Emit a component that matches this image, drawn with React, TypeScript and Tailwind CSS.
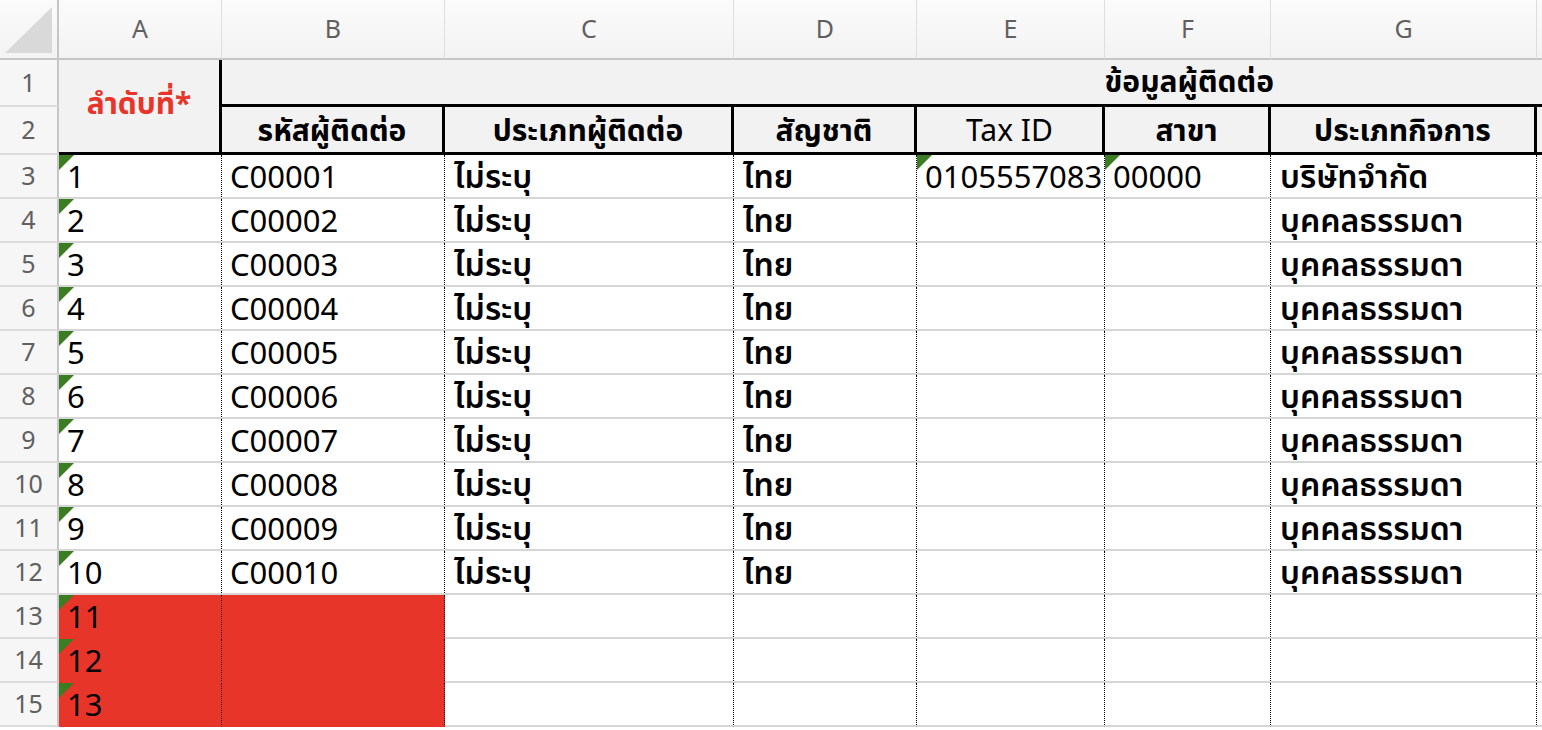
import React from "react";

type Row = {
  n: string;
  code?: string;
  type?: string;
  nat?: string;
  tax?: string;
  branch?: string;
  biz?: string;
  red?: boolean;
};

const rows: Row[] = [
  { n: "1", code: "C00001", type: "ไม่ระบุ", nat: "ไทย", tax: "0105557083", branch: "00000", biz: "บริษัทจำกัด" },
  { n: "2", code: "C00002", type: "ไม่ระบุ", nat: "ไทย", biz: "บุคคลธรรมดา" },
  { n: "3", code: "C00003", type: "ไม่ระบุ", nat: "ไทย", biz: "บุคคลธรรมดา" },
  { n: "4", code: "C00004", type: "ไม่ระบุ", nat: "ไทย", biz: "บุคคลธรรมดา" },
  { n: "5", code: "C00005", type: "ไม่ระบุ", nat: "ไทย", biz: "บุคคลธรรมดา" },
  { n: "6", code: "C00006", type: "ไม่ระบุ", nat: "ไทย", biz: "บุคคลธรรมดา" },
  { n: "7", code: "C00007", type: "ไม่ระบุ", nat: "ไทย", biz: "บุคคลธรรมดา" },
  { n: "8", code: "C00008", type: "ไม่ระบุ", nat: "ไทย", biz: "บุคคลธรรมดา" },
  { n: "9", code: "C00009", type: "ไม่ระบุ", nat: "ไทย", biz: "บุคคลธรรมดา" },
  { n: "10", code: "C00010", type: "ไม่ระบุ", nat: "ไทย", biz: "บุคคลธรรมดา" },
  { n: "11", red: true },
  { n: "12", red: true },
  { n: "13", red: true },
];

const Tri = () => (
  <svg className="absolute left-0 top-0" width="15" height="15" viewBox="0 0 15 15">
    <polygon points="0,0 15,0 0,15" fill="#3b7d23" />
  </svg>
);

const Cell = ({
  children,
  red,
  tri,
  thai,
}: {
  children?: React.ReactNode;
  red?: boolean;
  tri?: boolean;
  thai?: boolean;
}) => (
  <div
    className={
      "relative flex items-center whitespace-nowrap border-r border-b-2 border-r-black pl-2 text-[31px] text-black [border-right-style:dotted] " +
      (red ? "bg-[#e8352a] border-b-[#e8352a] " : "bg-white border-b-[#d6d6d6] ") +
      (thai ? "pl-[9px] text-[32px] font-semibold" : "")
    }
  >
    {tri && <Tri />}
    {children}
  </div>
);

const ColHead = ({ label }: { label: string }) => (
  <div className="flex items-center justify-center border-r border-b-2 border-r-[#dedede] border-b-[#c6c6c6] bg-gradient-to-b from-[#fbfbfb] to-[#f3f3f3] text-[25px] text-[#606060]">
    {label}
  </div>
);

const RowHead = ({ label }: { label: string }) => (
  <div className="flex items-center justify-center border-r-2 border-b-2 border-r-[#c6c6c6] border-b-[#dcdcdc] bg-[#f6f6f6] text-[25px] text-[#606060]">
    {label}
  </div>
);

const HeadCell = ({ label }: { label: string }) => (
  <div className="flex items-center justify-center whitespace-nowrap border-r-[3px] border-b-[3px] border-black bg-[#f2f2f2] text-[30px] font-bold text-black">
    {label}
  </div>
);

export default function App() {
  return (
    <div className="h-[730px] w-[1542px] overflow-hidden bg-white font-['Noto_Sans','Noto_Sans_Thai',Tahoma,sans-serif]">
      <div className="grid grid-cols-[59px_163px_223px_289px_183px_188px_166px_266px_1fr] grid-rows-[60px_47px_48px_repeat(13,44px)]">
        {/* column headers */}
        <div className="relative border-r-2 border-b-2 border-r-[#c6c6c6] border-b-[#c6c6c6] bg-gradient-to-b from-[#fbfbfb] to-[#f3f3f3]">
          <svg className="absolute left-[5px] top-[7px]" width="47" height="46" viewBox="0 0 47 46">
            <polygon points="0,46 47,46 47,0" fill="#d9d9d9" />
          </svg>
        </div>
        {["A", "B", "C", "D", "E", "F", "G", ""].map((c, i) => (
          <ColHead key={i} label={c} />
        ))}

        {/* row 1 */}
        <RowHead label="1" />
        <div className="row-span-2 flex items-center justify-center border-r-[3px] border-b-[3px] border-black bg-[#f2f2f2] pb-2 text-[30px] font-bold text-[#e8352a]">
          ลำดับที่*
        </div>
        <div className="col-span-7 flex items-center justify-end border-b-[3px] border-black bg-[#f2f2f2] pr-[272px] pb-1 text-[30px] font-bold text-black">
          ข้อมูลผู้ติดต่อ
        </div>

        {/* row 2 */}
        <RowHead label="2" />
        <HeadCell label="รหัสผู้ติดต่อ" />
        <HeadCell label="ประเภทผู้ติดต่อ" />
        <HeadCell label="สัญชาติ" />
        <div className="flex items-center justify-center whitespace-nowrap border-r-[3px] border-b-[3px] border-black bg-[#f2f2f2] text-[30px] text-black">
          Tax ID
        </div>
        <HeadCell label="สาขา" />
        <HeadCell label="ประเภทกิจการ" />
        <div className="border-b-[3px] border-black bg-[#f2f2f2]" />

        {/* data rows */}
        {rows.map((r, i) => (
          <React.Fragment key={r.n}>
            <RowHead label={String(i + 3)} />
            <Cell red={r.red} tri>
              {r.n}
            </Cell>
            <Cell red={r.red}>{r.code}</Cell>
            <Cell thai>{r.type}</Cell>
            <Cell thai>{r.nat}</Cell>
            <Cell tri={!!r.tax}>{r.tax}</Cell>
            <Cell tri={!!r.branch}>{r.branch}</Cell>
            <Cell thai>{r.biz}</Cell>
            <Cell />
          </React.Fragment>
        ))}
      </div>
    </div>
  );
}
